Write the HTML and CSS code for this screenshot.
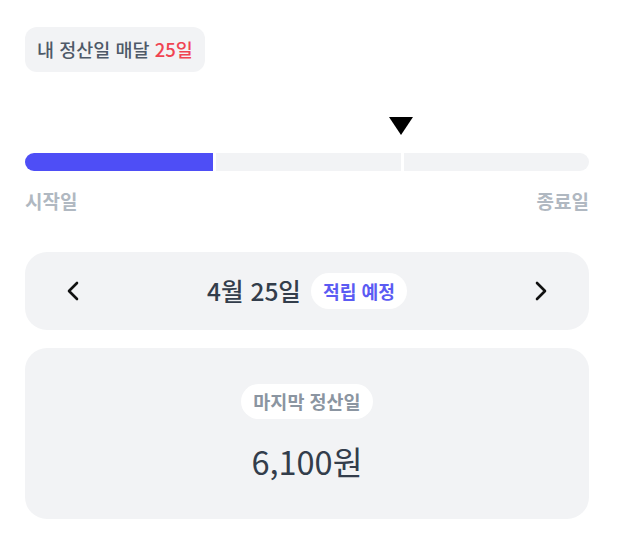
FILE: index.html
```html
<!DOCTYPE html>
<html lang="ko">
<head>
    <meta charset="UTF-8">
    <meta name="viewport" content="width=device-width, initial-scale=1.0">
    <title>정산 현황</title>
    <link rel="stylesheet" href="styles.css">
</head>
<body>
    <div class="pagina">
        <div class="badge-ciclo">내 정산일 매달 <span class="acento">25일</span></div>

        <div class="progreso">
            <svg class="marcador" width="24" height="18" viewBox="0 0 24 18">
                <polygon points="0,0 24,0 12,18" fill="#000"/>
            </svg>
            <div class="progreso-track">
                <div class="segmento lleno"></div>
                <div class="segmento"></div>
                <div class="segmento"></div>
            </div>
            <div class="progreso-etiquetas">
                <span>시작일</span>
                <span>종료일</span>
            </div>
        </div>

        <div class="nav-fecha">
            <button class="nav-control">
                <svg width="16" height="20" viewBox="0 0 16 20">
                    <polyline points="12,2 4,10 12,18" fill="none" stroke="#111" stroke-width="2.6" stroke-linecap="round" stroke-linejoin="round"/>
                </svg>
            </button>
            <div class="nav-centro">
                <span class="fecha">4월 25일</span>
                <span class="pill pill-azul">적립 예정</span>
            </div>
            <button class="nav-control">
                <svg width="16" height="20" viewBox="0 0 16 20">
                    <polyline points="4,2 12,10 4,18" fill="none" stroke="#111" stroke-width="2.6" stroke-linecap="round" stroke-linejoin="round"/>
                </svg>
            </button>
        </div>

        <div class="resumen">
            <span class="pill pill-gris">마지막 정산일</span>
            <div class="monto">6,100원</div>
        </div>
    </div>
</body>
</html>
```

FILE: styles.css
```css
* {
    box-sizing: border-box;
}

body {
    margin: 0;
    background: #fff;
    font-family: "Noto Sans CJK KR", "Noto Sans", sans-serif;
}

.pagina {
    width: 614px;
    padding: 27px 25px 0 25px;
    display: flex;
    flex-direction: column;
}

.badge-ciclo {
    align-self: flex-start;
    background: #f2f3f5;
    border-radius: 12px;
    padding: 12px 12px;
    font-size: 18.5px;
    line-height: 21px;
    font-weight: 500;
    color: #4e5968;
}

.acento {
    color: #f04452;
}

.progreso {
    margin-top: 45px;
    display: flex;
    flex-direction: column;
}

.marcador {
    display: block;
    margin-left: 364px; /* sobre la segunda división */
}

.progreso-track {
    margin-top: 18px;
    display: grid;
    grid-template-columns: 188px 1fr 1fr;
    gap: 3px;
    height: 18px;
    border-radius: 9px;
    overflow: hidden;
}

.segmento {
    background: #f2f3f5;
}

.segmento.lleno {
    background: #4e4ef6;
}

.progreso-etiquetas {
    margin-top: 18px;
    display: flex;
    justify-content: space-between;
    font-size: 19px;
    line-height: 24px;
    font-weight: 700;
    color: #b0b8c1;
}

.nav-fecha {
    margin-top: 39px;
    height: 78px;
    background: #f2f3f5;
    border-radius: 22px;
    display: flex;
    align-items: center;
    justify-content: space-between;
    padding: 0 40px;
}

.nav-control {
    background: none;
    border: none;
    padding: 0;
    display: flex;
    cursor: pointer;
}

.nav-centro {
    display: flex;
    align-items: center;
    gap: 10px;
}

.fecha {
    font-size: 24.5px;
    line-height: 30px;
    font-weight: 500;
    color: #333d4b;
}

.pill {
    background: #fff;
    border-radius: 18px;
    padding: 6px 12px;
    line-height: 24px;
    font-weight: 700;
}

.pill-azul {
    font-size: 18.2px;
    color: #5b5bf3;
}

.pill-gris {
    font-size: 18.5px;
    color: #8b95a1;
    line-height: 23px;
}

.resumen {
    margin-top: 18px;
    height: 171px;
    background: #f2f3f5;
    border-radius: 22px;
    display: flex;
    flex-direction: column;
    align-items: center;
    padding-top: 36px;
}

.monto {
    margin-top: 22px;
    font-size: 32.5px;
    line-height: 40px;
    font-weight: 400;
    color: #333d4b;
}
```
